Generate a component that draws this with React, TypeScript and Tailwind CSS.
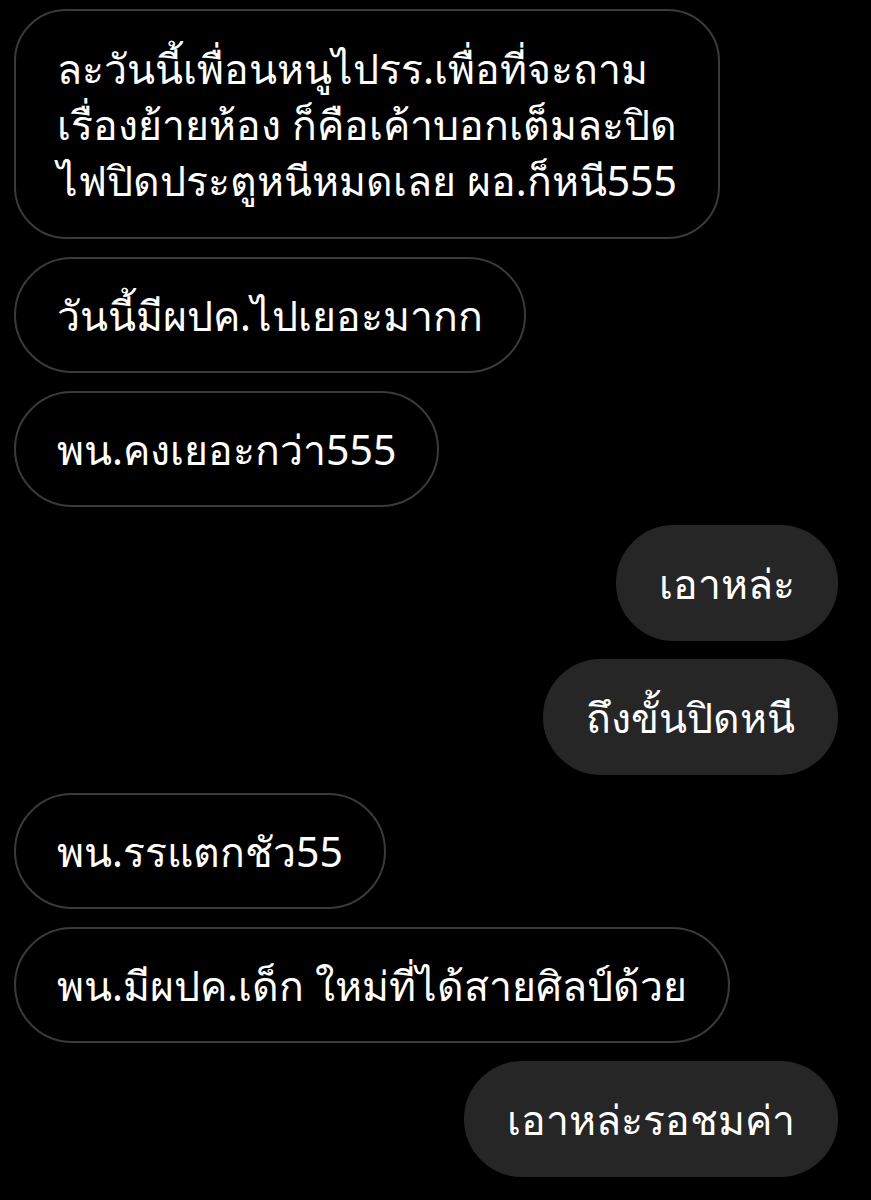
import type { FC } from "react";

interface Message {
  lines: string[];
  mine?: boolean;
}

const messages: Message[] = [
  {
    lines: [
      "ละวันนี้เพื่อนหนูไปรร.เพื่อที่จะถาม",
      "เรื่องย้ายห้อง ก็คือเค้าบอกเต็มละปิด",
      "ไฟปิดประตูหนีหมดเลย ผอ.ก็หนี555",
    ],
  },
  { lines: ["วันนี้มีผปค.ไปเยอะมากก"] },
  { lines: ["พน.คงเยอะกว่า555"] },
  { lines: ["เอาหล่ะ"], mine: true },
  { lines: ["ถึงขั้นปิดหนี"], mine: true },
  { lines: ["พน.รรแตกชัว55"] },
  { lines: ["พน.มีผปค.เด็ก ใหม่ที่ได้สายศิลป์ด้วย"] },
  { lines: ["เอาหล่ะรอชมค่า"], mine: true },
];

const Bubble: FC<{ message: Message }> = ({ message }) => {
  const multi = message.lines.length > 1;
  return (
    <div className={message.mine ? "flex justify-end" : "flex justify-start"}>
      <div
        className={
          (message.mine
            ? "bg-[#262626] border-2 border-[#262626] "
            : "bg-black border-2 border-[#3a3a3a] ") +
          (multi ? "rounded-[52px] py-[29px] " : "rounded-full py-[28px] ") +
          "px-[41px] text-white text-[41px] leading-[56px] whitespace-nowrap"
        }
      >
        {message.lines.map((line, i) => (
          <div key={i}>{line}</div>
        ))}
      </div>
    </div>
  );
};

const App: FC = () => {
  return (
    <div
      className="min-h-[1200px] w-[871px] bg-black pt-[9px] pl-[14px] pr-[33px] flex flex-col gap-[18px]"
      style={{ fontFamily: '"Noto Sans", "DejaVu Sans", sans-serif' }}
    >
      {messages.map((m, i) => (
        <Bubble key={i} message={m} />
      ))}
    </div>
  );
};

export default App;
